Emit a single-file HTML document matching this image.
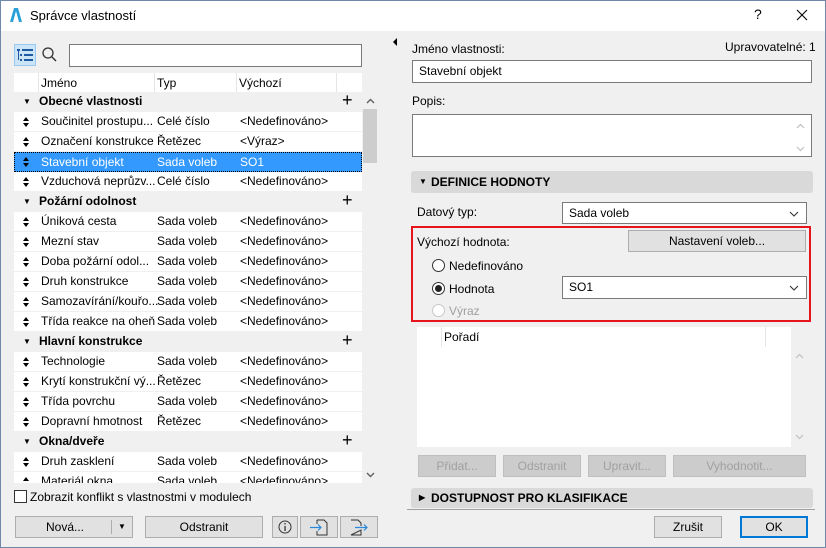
<!DOCTYPE html>
<html><head><meta charset="utf-8"><style>
*{box-sizing:border-box;margin:0;padding:0}
body{width:826px;height:548px;background:#f0f0f0;font-family:"Liberation Sans",sans-serif;font-size:12px;color:#000;position:relative;overflow:hidden}
.a{position:absolute}
.win{left:0;top:0;width:826px;height:548px;border:1px solid #6d88a8}
.title{left:1px;top:1px;width:824px;height:30px;background:#fff}
.row{position:absolute;left:14px;width:348px;height:20px;background:#fff;border-bottom:1px solid #f0f0f0;line-height:19px;white-space:nowrap}
.row span{position:absolute;top:0}
.row .ic{left:9px;top:5px;width:6px;height:10px}
.row .n{left:27px}.row .t{left:143px}.row .d{left:226px}
.grp{background:#f0f0f0;font-weight:bold}
.grp .tri{left:9px;font-size:8px}
.grp .plus{left:328px;font-weight:normal;font-size:18px;top:-1px}
.sel{background:#3399ff;color:#fff;border:1px dotted #000}
.btn{position:absolute;background:#e1e1e1;border:1px solid #adadad;text-align:center;line-height:20px}
.dis{color:#a0a0a0;background:#cccccc;border-color:#bfbfbf}
.inp{position:absolute;background:#fff;border:1px solid #7a7a7a;padding-left:6px;line-height:20px}
.sec{position:absolute;left:411px;width:402px;height:22px;background:#d9d9d9;border-radius:3px;font-weight:bold;line-height:22px;padding-left:20px}
.rad{position:absolute;width:13px;height:13px;border:1px solid #333;border-radius:50%;background:#fff}
</style></head><body>
<svg width="0" height="0" style="position:absolute"><defs>
<symbol id="ud" viewBox="0 0 6 10"><path d="M0 4 L3 0 L6 4 Z M0 6 L3 10 L6 6 Z" fill="#000"/></symbol>
<symbol id="udw" viewBox="0 0 6 10"><path d="M0 4 L3 0 L6 4 Z M0 6 L3 10 L6 6 Z" fill="#fff"/></symbol>
</defs></svg>
<div class="a win"></div>
<div class="a title"></div>
<svg class="a" style="left:9px;top:7px" width="14" height="16"><path d="M1 15 L5 1 H9 L13 15 Z" fill="#2aa0d8"/><path d="M4 15 L7 4 L10 15 Z" fill="#fff"/></svg>
<div class="a" style="left:30px;top:8px;font-size:13px">Správce vlastností</div>
<div class="a" style="left:754px;top:6px;font-size:14px">?</div>
<svg class="a" style="left:796px;top:9px" width="12" height="12"><path d="M1 1 L11 11 M11 1 L1 11" stroke="#000" stroke-width="1.1"/></svg>

<div class="a" style="left:14px;top:44px;width:22px;height:22px;background:#cce4f7;border:1px solid #99c9ef"></div>
<svg class="a" style="left:17px;top:49px" width="17" height="13"><g fill="#1e5aa0"><rect x="0" y="0" width="3" height="2"/><rect x="5" y="0" width="11" height="2"/><rect x="3" y="5" width="2" height="2"/><rect x="7" y="5" width="9" height="2"/><rect x="3" y="10" width="2" height="2"/><rect x="7" y="10" width="9" height="2"/><rect x="1" y="2" width="1" height="9"/></g></svg>
<svg class="a" style="left:42px;top:47px" width="16" height="16"><circle cx="6" cy="6" r="5" fill="none" stroke="#333" stroke-width="1.3"/><path d="M10 10 L14 14" stroke="#333" stroke-width="1.5"/></svg>
<div class="inp" style="left:69px;top:44px;width:293px;height:23px;border-color:#7a7a7a"></div>

<div class="a" style="left:14px;top:73px;width:348px;height:19px;background:#fff"></div>
<div class="a" style="left:38px;top:73px;width:1px;height:19px;background:#e5e5e5"></div>
<div class="a" style="left:154px;top:73px;width:1px;height:19px;background:#e5e5e5"></div>
<div class="a" style="left:236px;top:73px;width:1px;height:19px;background:#e5e5e5"></div>
<div class="a" style="left:336px;top:73px;width:1px;height:19px;background:#e5e5e5"></div>
<div class="a" style="left:41px;top:76px">Jméno</div>
<div class="a" style="left:157px;top:76px">Typ</div>
<div class="a" style="left:239px;top:76px">Výchozí</div>

<div class="row grp" style="top:92px"><span class="tri">▼</span><span class="n" style="left:25px">Obecné vlastnosti</span><span class="plus">+</span></div>
<div class="row" style="top:112px"><svg class="ic a"><use href="#ud"/></svg><span class="n">Součinitel prostupu...</span><span class="t">Celé číslo</span><span class="d">&lt;Nedefinováno&gt;</span></div>
<div class="row" style="top:132px"><svg class="ic a"><use href="#ud"/></svg><span class="n">Označení konstrukce</span><span class="t">Řetězec</span><span class="d">&lt;Výraz&gt;</span></div>
<div class="row sel" style="top:152px"><svg class="a" style="left:8px;top:4px" width="6" height="10"><use href="#ud"/></svg><span class="n" style="left:26px">Stavební objekt</span><span class="t" style="left:142px">Sada voleb</span><span class="d" style="left:225px">SO1</span></div>
<div class="row" style="top:172px"><svg class="ic a"><use href="#ud"/></svg><span class="n">Vzduchová neprůzv...</span><span class="t">Celé číslo</span><span class="d">&lt;Nedefinováno&gt;</span></div>
<div class="row grp" style="top:192px"><span class="tri">▼</span><span class="n" style="left:25px">Požární odolnost</span><span class="plus">+</span></div>
<div class="row" style="top:212px"><svg class="ic a"><use href="#ud"/></svg><span class="n">Úniková cesta</span><span class="t">Sada voleb</span><span class="d">&lt;Nedefinováno&gt;</span></div>
<div class="row" style="top:232px"><svg class="ic a"><use href="#ud"/></svg><span class="n">Mezní stav</span><span class="t">Sada voleb</span><span class="d">&lt;Nedefinováno&gt;</span></div>
<div class="row" style="top:252px"><svg class="ic a"><use href="#ud"/></svg><span class="n">Doba požární odol...</span><span class="t">Sada voleb</span><span class="d">&lt;Nedefinováno&gt;</span></div>
<div class="row" style="top:272px"><svg class="ic a"><use href="#ud"/></svg><span class="n">Druh konstrukce</span><span class="t">Sada voleb</span><span class="d">&lt;Nedefinováno&gt;</span></div>
<div class="row" style="top:292px"><svg class="ic a"><use href="#ud"/></svg><span class="n">Samozavírání/kouřo...</span><span class="t">Sada voleb</span><span class="d">&lt;Nedefinováno&gt;</span></div>
<div class="row" style="top:312px"><svg class="ic a"><use href="#ud"/></svg><span class="n">Třída reakce na oheň</span><span class="t">Sada voleb</span><span class="d">&lt;Nedefinováno&gt;</span></div>
<div class="row grp" style="top:332px"><span class="tri">▼</span><span class="n" style="left:25px">Hlavní konstrukce</span><span class="plus">+</span></div>
<div class="row" style="top:352px"><svg class="ic a"><use href="#ud"/></svg><span class="n">Technologie</span><span class="t">Sada voleb</span><span class="d">&lt;Nedefinováno&gt;</span></div>
<div class="row" style="top:372px"><svg class="ic a"><use href="#ud"/></svg><span class="n">Krytí konstrukční vý...</span><span class="t">Řetězec</span><span class="d">&lt;Nedefinováno&gt;</span></div>
<div class="row" style="top:392px"><svg class="ic a"><use href="#ud"/></svg><span class="n">Třída povrchu</span><span class="t">Sada voleb</span><span class="d">&lt;Nedefinováno&gt;</span></div>
<div class="row" style="top:412px"><svg class="ic a"><use href="#ud"/></svg><span class="n">Dopravní hmotnost</span><span class="t">Řetězec</span><span class="d">&lt;Nedefinováno&gt;</span></div>
<div class="row grp" style="top:432px"><span class="tri">▼</span><span class="n" style="left:25px">Okna/dveře</span><span class="plus">+</span></div>
<div class="row" style="top:452px"><svg class="ic a"><use href="#ud"/></svg><span class="n">Druh zasklení</span><span class="t">Sada voleb</span><span class="d">&lt;Nedefinováno&gt;</span></div>
<div class="a" style="left:14px;top:472px;width:348px;height:11px;overflow:hidden"><div class="row" style="top:0;left:0"><svg class="ic a"><use href="#ud"/></svg><span class="n">Materiál okna</span><span class="t">Sada voleb</span><span class="d">&lt;Nedefinováno&gt;</span></div></div>

<div class="a" style="left:362px;top:92px;width:16px;height:392px;background:#f0f0f0"></div>
<div class="a" style="left:363px;top:109px;width:14px;height:54px;background:#cdcdcd"></div>
<svg class="a" style="left:366px;top:98px" width="9" height="6"><path d="M1 5 L4.5 1.5 L8 5" fill="none" stroke="#606060" stroke-width="1.4"/></svg>
<svg class="a" style="left:366px;top:472px" width="9" height="6"><path d="M1 1 L4.5 4.5 L8 1" fill="none" stroke="#606060" stroke-width="1.4"/></svg>

<div class="a" style="left:14px;top:490px;width:13px;height:13px;background:#fff;border:1px solid #333"></div>
<div class="a" style="left:30px;top:490px">Zobrazit konflikt s vlastnostmi v modulech</div>
<div class="btn" style="left:15px;top:516px;width:118px;height:22px"><span style="position:absolute;left:30px">Nová...</span><span style="position:absolute;left:95px;top:3px;width:1px;height:14px;background:#adadad"></span><span style="position:absolute;left:102px;font-size:8px">▼</span></div>
<div class="btn" style="left:145px;top:516px;width:118px;height:22px">Odstranit</div>
<div class="btn" style="left:272px;top:516px;width:26px;height:22px"><svg style="margin-top:3px" width="14" height="14"><circle cx="7" cy="7" r="6" fill="none" stroke="#333"/><rect x="6.4" y="6" width="1.3" height="5" fill="#333"/><rect x="6.4" y="3" width="1.3" height="1.5" fill="#333"/></svg></div>
<div class="btn" style="left:300px;top:516px;width:38px;height:22px"><svg style="margin-top:2px" width="22" height="17"><path d="M9 1 H16 L19 4 V16 H9 V12" fill="none" stroke="#333"/><path d="M9 1 V5" stroke="#333"/><path d="M2 8.5 H13 M10 5.5 L13 8.5 L10 11.5" fill="none" stroke="#2b88d8" stroke-width="1.2"/></svg></div>
<div class="btn" style="left:340px;top:516px;width:38px;height:22px"><svg style="margin-top:2px" width="22" height="17"><path d="M3 1 H10 L13 4 V7 M13 11 V16 H3 Z" fill="none" stroke="#333"/><path d="M7 8.5 H19 M16 5.5 L19 8.5 L16 11.5" fill="none" stroke="#2b88d8" stroke-width="1.2"/></svg></div>

<svg class="a" style="left:393px;top:38px" width="5" height="8"><path d="M4 0 L0 4 L4 8 Z" fill="#000"/></svg>

<div class="a" style="left:412px;top:42px">Jméno vlastnosti:</div>
<div class="a" style="left:725px;top:40px">Upravovatelné: 1</div>
<div class="inp" style="left:412px;top:60px;width:400px;height:23px">Stavební objekt</div>
<div class="a" style="left:412px;top:94px">Popis:</div>
<div class="inp" style="left:412px;top:114px;width:400px;height:43px"></div>
<svg class="a" style="left:796px;top:123px" width="9" height="6"><path d="M1 5 L4.5 1.5 L8 5" fill="none" stroke="#c0c0c0" stroke-width="1.2"/></svg>
<svg class="a" style="left:796px;top:146px" width="9" height="6"><path d="M1 1 L4.5 4.5 L8 1" fill="none" stroke="#c0c0c0" stroke-width="1.2"/></svg>

<div class="sec" style="top:171px"><span style="position:absolute;left:8px;font-size:8px">▼</span>DEFINICE HODNOTY</div>
<div class="a" style="left:417px;top:205px">Datový typ:</div>
<div class="inp" style="left:562px;top:202px;width:245px;height:22px">Sada voleb<svg style="position:absolute;right:7px;top:8px" width="10" height="6"><path d="M1 1 L5 5 L9 1" fill="none" stroke="#333" stroke-width="1.1"/></svg></div>
<div class="a" style="left:411px;top:226px;width:400px;height:96px;border:2px solid #e8141c"></div>
<div class="a" style="left:417px;top:235px">Výchozí hodnota:</div>
<div class="btn" style="left:628px;top:230px;width:178px;height:22px;background:#e1e1e1">Nastavení voleb...</div>
<div class="rad" style="left:432px;top:259px"></div><div class="a" style="left:449px;top:259px">Nedefinováno</div>
<div class="rad" style="left:432px;top:282px"></div><div class="a" style="left:435px;top:285px;width:7px;height:7px;border-radius:50%;background:#222"></div>
<div class="a" style="left:449px;top:282px">Hodnota</div>
<div class="inp" style="left:562px;top:276px;width:245px;height:23px">SO1<svg style="position:absolute;right:7px;top:8px" width="10" height="6"><path d="M1 1 L5 5 L9 1" fill="none" stroke="#333" stroke-width="1.1"/></svg></div>
<div class="rad" style="left:432px;top:304px;border-color:#c8c8c8"></div><div class="a" style="left:449px;top:304px;color:#a0a0a0">Výraz</div>

<div class="a" style="left:417px;top:327px;width:374px;height:20px;background:#fff"></div>
<div class="a" style="left:441px;top:327px;width:1px;height:20px;background:#e5e5e5"></div>
<div class="a" style="left:765px;top:327px;width:1px;height:20px;background:#e5e5e5"></div>
<div class="a" style="left:444px;top:330px">Pořadí</div>
<div class="a" style="left:417px;top:347px;width:374px;height:100px;background:#fff"></div>
<svg class="a" style="left:795px;top:353px" width="9" height="6"><path d="M1 5 L4.5 1.5 L8 5" fill="none" stroke="#c0c0c0" stroke-width="1.2"/></svg>
<svg class="a" style="left:795px;top:434px" width="9" height="6"><path d="M1 1 L4.5 4.5 L8 1" fill="none" stroke="#c0c0c0" stroke-width="1.2"/></svg>
<div class="btn dis" style="left:418px;top:455px;width:78px;height:22px">Přidat...</div>
<div class="btn dis" style="left:503px;top:455px;width:78px;height:22px">Odstranit</div>
<div class="btn dis" style="left:588px;top:455px;width:78px;height:22px">Upravit...</div>
<div class="btn dis" style="left:673px;top:455px;width:133px;height:22px">Vyhodnotit...</div>
<div class="sec" style="top:488px;height:20px;line-height:20px"><span style="position:absolute;left:8px;font-size:8px">▶</span>DOSTUPNOST PRO KLASIFIKACE</div>
<div class="a" style="left:407px;top:509px;width:408px;height:1px;background:#a0a0a0"></div>
<div class="btn" style="left:654px;top:516px;width:68px;height:22px">Zrušit</div>
<div class="btn" style="left:740px;top:516px;width:68px;height:22px;border:2px solid #0078d7;line-height:18px">OK</div>
</body></html>
